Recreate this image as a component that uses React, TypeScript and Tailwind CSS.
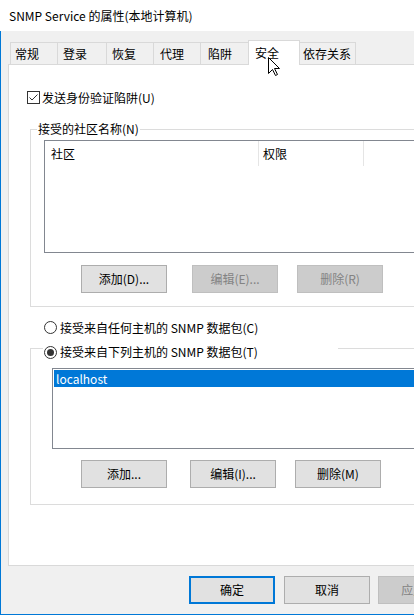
import React from 'react';

const font = { fontFamily: '"Noto Sans CJK SC", "Noto Sans", sans-serif' };

const tabs = [
  { label: '常规', w: 'w-[47px]', pl: 'pl-[4px]' },
  { label: '登录', w: 'w-[49px]', pl: 'pl-[5px]' },
  { label: '恢复', w: 'w-[47px]', pl: 'pl-[5px]' },
  { label: '代理', w: 'w-[47px]', pl: 'pl-[6px]' },
  { label: '陷阱', w: 'w-[48px]', pl: 'pl-[7px]' },
];

const Btn = ({
  children,
  disabled,
  primary,
  className = '',
}: {
  children: React.ReactNode;
  disabled?: boolean;
  primary?: boolean;
  className?: string;
}) => {
  const look = disabled
    ? 'bg-[#cccccc] border border-[#bfbfbf] text-[#838383]'
    : primary
      ? 'bg-[#e1e1e1] border-2 border-[#0078d7] text-black'
      : 'bg-[#e1e1e1] border border-[#adadad] text-black';
  return (
    <div className={`w-[86px] h-[28px] shrink-0 flex items-center justify-center text-[12px] leading-none ${look} ${className}`}>
      {children}
    </div>
  );
};

const CheckBox = () => (
  <svg width="13" height="13" viewBox="0 0 13 13" className="shrink-0">
    <rect x="0.5" y="0.5" width="12" height="12" fill="#fff" stroke="#333" />
    <path d="M2.5 6.5 L5 9 L10.5 3.5" fill="none" stroke="#333" strokeWidth="1" />
  </svg>
);

const Radio = ({ on }: { on?: boolean }) => (
  <svg width="13" height="13" viewBox="0 0 13 13" className="shrink-0">
    <circle cx="6.5" cy="6.5" r="6" fill="#fff" stroke="#333" />
    {on && <circle cx="6.5" cy="6.5" r="3.5" fill="#333" />}
  </svg>
);

export default function App() {
  return (
    <div className="relative w-[414px] h-[616px] overflow-hidden bg-white text-black text-[12px]" style={font}>
      {/* title bar */}
      <div className="h-[31px] pl-[9px] flex items-center text-[12px] bg-white">
        SNMP Service 的属性(本地计算机)
      </div>

      {/* window body */}
      <div className="h-[584px] bg-[#f0f0f0] border-l border-b border-[#0078d7] overflow-hidden">
        {/* tabs */}
        <div className="pt-[9px] pl-[9px] flex items-end h-[33px]">
          {tabs.map((t) => (
            <div
              key={t.label}
              className={`${t.w} ${t.pl} h-[22px] shrink-0 border-l border-t border-[#d9d9d9] bg-[#f0f0f0] flex items-center leading-none`}
            >
              {t.label}
            </div>
          ))}
          <div className="relative z-10 w-[52px] h-[25px] mb-[-1px] shrink-0 pl-[6px] pb-[1px] border-l border-t border-r border-[#d9d9d9] bg-white flex items-center leading-none">
            安全
          </div>
          <div className="w-[56px] h-[22px] pl-[3px] shrink-0 border-t border-r border-[#d9d9d9] bg-[#f0f0f0] flex items-center leading-none">
            依存关系
          </div>
        </div>

        {/* tab page */}
        <div className="ml-[7px] w-[420px] h-[502px] bg-white border border-[#d9d9d9]">
          <div className="mt-[26px] ml-[18px] h-[13px] flex items-center gap-[2px]">
            <CheckBox />
            <span className="leading-none">发送身份验证陷阱(U)</span>
          </div>

          {/* community group */}
          <div className="relative mt-[25px] ml-[21px] w-[400px] h-[178px] border border-[#dcdcdc]">
            <div className="absolute left-[6px] top-[-9px] h-[16px] px-[1px] bg-white leading-[16px]">
              接受的社区名称(N)
            </div>
            <div className="ml-[13px] mt-[10px] w-[380px] h-[113px] border border-[#828790]">
              <div className="flex h-[25px]">
                <div className="w-[214px] pl-[6px] border-r border-[#e5e5e5] flex items-center leading-none">社区</div>
                <div className="w-[105px] pl-[4px] border-r border-[#e5e5e5] flex items-center leading-none">权限</div>
              </div>
            </div>
            <div className="flex mt-[12px] ml-[50px]">
              <Btn>添加(D)...</Btn>
              <Btn disabled className="ml-[25px]">编辑(E)...</Btn>
              <Btn disabled className="ml-[19px]">删除(R)</Btn>
            </div>
          </div>

          <div className="mt-[14px] ml-[35px] h-[13px] flex items-center gap-[3px]">
            <Radio />
            <span className="leading-none">接受来自任何主机的 SNMP 数据包(C)</span>
          </div>

          {/* hosts group */}
          <div className="relative mt-[14px] ml-[21px] w-[400px] h-[157px] border border-[#dcdcdc]">
            <div className="absolute left-[12px] top-[-5px] w-[295px] h-[16px] pl-[1px] bg-white flex items-center gap-[3px]">
              <Radio on />
              <span className="leading-none">接受来自下列主机的 SNMP 数据包(T)</span>
            </div>
            <div className="ml-[21px] mt-[19px] w-[380px] h-[81px] border border-[#828790] pt-[1px] pl-[1px]">
              <div className="h-[17px] bg-[#0078d7] text-white pl-[2px] flex items-center leading-none">localhost</div>
            </div>
            <div className="flex mt-[11px] ml-[50px]">
              <Btn>添加...</Btn>
              <Btn className="ml-[23px]">编辑(I)...</Btn>
              <Btn className="ml-[19px]">删除(M)</Btn>
            </div>
          </div>
        </div>

        {/* dialog buttons */}
        <div className="flex mt-[10px] ml-[188px]">
          <Btn primary>确定</Btn>
          <Btn className="ml-[9px]">取消</Btn>
          <Btn disabled className="ml-[8px]">应用(A)</Btn>
        </div>
      </div>

      {/* mouse pointer */}
      <svg width="13" height="20" viewBox="0 0 13 20" className="absolute left-[268px] top-[57px] z-20">
        <path d="M0.5 0.5 L0.5 16.5 L4.5 12.5 L7.5 18.5 L9.5 17.5 L6.5 11.5 L11.5 11.5 Z" fill="#fff" stroke="#000" strokeWidth="1" strokeLinejoin="miter" />
      </svg>
    </div>
  );
}
